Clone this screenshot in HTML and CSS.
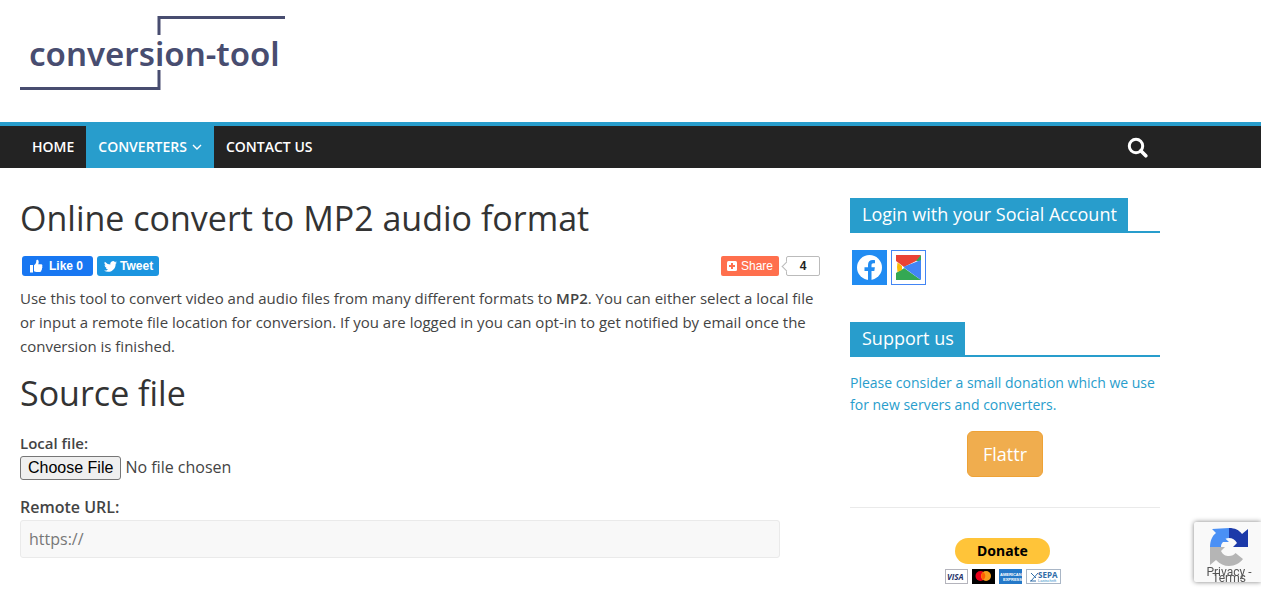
FILE: index.html
```
<!DOCTYPE html>
<html lang="en">
<head>
<meta charset="utf-8">
<meta name="viewport" content="width=device-width, initial-scale=1">
<title>Online convert to MP2 audio format</title>
<link rel="stylesheet" href="styles.css">
</head>
<body>
<header class="site-header">
  <a class="logo" href="#" aria-label="conversion-tool home">
    <svg width="265" height="76" viewBox="0 0 265 76">
      <g fill="none" stroke="#484d70" stroke-width="3">
        <path d="M265 2.500H139V20"/>
        <path d="M0 73.500H139V55"/>
      </g>
      <text class="logo-text" x="9" y="51">conversion-tool</text>
    </svg>
  </a>
</header>
<nav class="main-nav">
  <div class="container nav-inner">
    <a class="nav-link" href="#">HOME</a>
    <a class="nav-link active" href="#">CONVERTERS
      <svg class="caret" width="10" height="6" viewBox="0 0 10 6" fill="none" stroke="#fff" stroke-width="1.400"><path d="M1 1l4 4 4-4"/></svg>
    </a>
    <a class="nav-link" href="#">CONTACT US</a>
    <button class="search" type="button" aria-label="Search">
      <svg width="21" height="21" viewBox="0 0 21 21" fill="none" stroke="#fff"><circle cx="9" cy="9" r="6.700" stroke-width="3"/><path d="M13.800 13.800l5 5" stroke-width="3.600" stroke-linecap="round"/></svg>
    </button>
  </div>
</nav>
<div class="container layout">
  <main class="content">
    <h1 class="heading">Online convert to MP2 audio format</h1>
    <div class="social">
      <button class="pill like" type="button">
        <svg width="14" height="14" viewBox="0 0 14 14" fill="#fff"><path d="M1 6h3v7.500H1zM5 6.200C6.800 5.400 7.300 3.700 7.300 1.600 7.300.400 9.700.500 9.700 2.900c0 .9-.200 1.700-.500 2.400h3c1.200 0 1.600 1.200.9 1.900.600.700.400 1.500-.200 2 .300.700.100 1.400-.500 1.800.1 1.200-.500 1.900-1.600 1.900H7.500c-1 0-1.600-.200-2.500-.600z"/></svg>
        <span>Like 0</span>
      </button>
      <button class="pill tweet" type="button">
        <svg width="13" height="11" viewBox="0 0 24 20" fill="#fff"><path d="M24 2.400a9.800 9.800 0 0 1-2.800.8A5 5 0 0 0 23.300.500a9.900 9.900 0 0 1-3.100 1.200 4.900 4.900 0 0 0-8.400 4.500A14 14 0 0 1 1.700 1a4.900 4.900 0 0 0 1.500 6.600A4.900 4.900 0 0 1 1 7v.1a4.900 4.900 0 0 0 3.900 4.800 5 5 0 0 1-2.200.1 4.900 4.900 0 0 0 4.600 3.400A9.900 9.900 0 0 1 0 17.500a14 14 0 0 0 7.500 2.200c9.100 0 14-7.500 14-14V5A10 10 0 0 0 24 2.400z"/></svg>
        <span>Tweet</span>
      </button>
      <button class="pill share" type="button">
        <svg width="10" height="10" viewBox="0 0 10 10"><rect width="10" height="10" rx="1.500" fill="#fff"/><path d="M5 2v6M2 5h6" stroke="#ff6f4d" stroke-width="2"/></svg>
        <span>Share</span>
      </button>
      <span class="count">4</span>
    </div>
    <p class="intro">Use this tool to convert video and audio files from many different formats to <strong>MP2</strong>. You can either select a local file or input a remote file location for conversion. If you are logged in you can opt-in to get notified by email once the conversion is finished.</p>
    <h2 class="heading">Source file</h2>
    <form class="source">
      <label class="local-label" for="local">Local file:</label>
      <input class="file" id="local" type="file">
      <label class="remote-label" for="remote">Remote URL:</label>
      <input class="url" id="remote" type="text" placeholder="https://">
    </form>
  </main>
  <aside class="sidebar">
    <section class="widget">
      <h3 class="widget-title"><span>Login with your Social Account</span></h3>
      <div class="logins">
        <a class="login facebook" href="#" aria-label="Facebook">
          <svg width="25" height="25" viewBox="0 0 25 25"><circle cx="12.500" cy="12.500" r="12.500" fill="#fff"/><path d="M11 25v-9H7.500v-3.700H11V10c0-3.300 1.800-5 4.700-5 1.200 0 2.300.200 2.300.200v3h-1.500c-1.500 0-2 .9-2 1.900v2.200h3.400l-.600 3.700h-2.800v9z" fill="#218cf2"/></svg>
        </a>
        <a class="login google" href="#" aria-label="Google">
          <svg width="25" height="25" viewBox="0 0 25 25"><path d="M0 0h25l-3 5-14 7-8-6z" fill="#ea4335"/><path d="M25 0v7l-5-1zM0 25v-7l8-5 17 12z" fill="#34a853"/><path d="M25 5v20L7 12z" fill="#4285f4"/><path d="M1.500 7.500L6 11v4l-4.500 2q-1-5 0-9.500z" fill="#fbbc05"/><path d="M6 11.500l2.500 1L6 14.500z" fill="#fff"/></svg>
        </a>
      </div>
    </section>
    <section class="widget">
      <h3 class="widget-title"><span>Support us</span></h3>
      <a class="plea" href="#">Please consider a small donation which we use for new servers and converters.</a>
      <div class="support">
        <button class="flattr" type="button">Flattr</button>
        <hr class="rule">
        <div class="paypal">
          <button class="donate" type="button">Donate</button>
          <div class="cards">
            <svg width="23" height="15" viewBox="0 0 23 15"><rect x=".5" y=".5" width="22" height="14" fill="#fff" stroke="#b4b4bc"/><text class="visa" x="2" y="11">VISA</text></svg>
            <svg width="23" height="15" viewBox="0 0 23 15"><rect width="23" height="15"/><circle cx="8.500" cy="7" r="5" fill="#eb001b"/><circle cx="14" cy="7" r="5" fill="#f79e1b"/><path d="M11.300 3a5 5 0 0 1 0 8 5 5 0 0 1 0-8z" fill="#ff5f00"/></svg>
            <svg width="23" height="15" viewBox="0 0 23 15"><rect width="23" height="15" fill="#2478c8"/><text class="amex" x="1" y="7">AMERICAN</text><text class="amex" x="4" y="12">EXPRESS</text></svg>
            <svg width="35" height="15" viewBox="0 0 35 15"><rect x=".5" y=".5" width="34" height="14" fill="#fff" stroke="#a9b6c6"/><path d="M5 4l5 5M5 12L12 4M4 12h6" fill="none" stroke="#2f6ca8"/><text class="sepa" x="12" y="9">SEPA</text><text class="sepa-sub" x="12" y="13">Lastschrift</text></svg>
          </div>
        </div>
      </div>
    </section>
  </aside>
</div>
<aside class="recaptcha">
  <svg width="38" height="38" viewBox="0 0 38 38"><path d="M19 0v10c-1.500 0-2.600.200-3.500.700L19 14l-6 0c-1.500 1.500-2 3-2 5H0C0 13 2 8 6 5L2 1z" fill="#4a90f5"/><path d="M19 0c6 0 10 2 13 6l6-5v18H23l4-4c-2-3.500-4.500-5-8-5z" fill="#1c3aa9"/><path d="M0 19h15l-4 4c2 4 4.500 5 8 5 3 0 5-1 6.500-3l7.500 6c-3 4-8 7-14 7-5 0-9-2-13-6l-6 5z" fill="#b5b5b5"/></svg>
  <div class="terms"><a href="#">Privacy</a> - <a href="#">Terms</a></div>
</aside>
</body>
</html>
```
FILE: styles.css
```
* { box-sizing: border-box; }
body { margin: 0; background: #fff; color: #444; font-family: "Open Sans", sans-serif; font-size: 15px; overflow: hidden; }
a { text-decoration: none; color: inherit; }
button { border: 0; padding: 0; font-family: inherit; cursor: pointer; }
svg { display: block; flex: none; }
.container { max-width: 1180px; padding: 0 20px; }
.site-header { padding: 15px 20px 31px; }
.logo { display: block; }
.logo-text { font: 600 33px "Noto Sans", sans-serif; fill: #484d70; }

.main-nav { background: #232323; border-top: 4px solid #289dcc; }
.nav-inner { display: flex; }
.nav-link { display: flex; align-items: center; gap: 5px; padding: 0 12px; line-height: 42px; font-size: 14px; font-weight: 600; color: #fff; }
.nav-link.active { background: #289dcc; }
.search { margin-left: auto; margin-right: 12px; background: none; display: flex; align-items: center; }

.layout { display: flex; gap: 30px; padding-top: 30px; }
.content { flex: 1; min-width: 0; }
.heading { margin: 0; font-size: 34px; font-weight: 400; line-height: 40px; color: #333; }
.social { display: flex; gap: 4px; padding: 18px 0 10px 2px; }
.pill { display: flex; align-items: center; gap: 5px; height: 20px; padding: 0 6px; border-radius: 3px; color: #fff; font: bold 12px "Liberation Sans", Arial, sans-serif; }
.like { background: #1877f2; padding: 0 10px 0 7px; gap: 6px; }
.tweet { background: #1b95e0; gap: 3px; padding: 0 6px 0 7px; }
.share { background: #ff6f4d; margin-left: auto; padding: 0 6px; gap: 4px; border-radius: 2px; font-weight: 400; }
.count { position: relative; width: 34px; height: 20px; margin-left: 3px; border: 1px solid #bbb; border-radius: 2px; text-align: center; font: bold 12px/18px "Liberation Sans", Arial, sans-serif; color: #222; }
.count::before { content: ""; position: absolute; left: -4px; top: 6px; width: 6px; height: 6px; background: #fff; border: solid #bbb; border-width: 0 0 1px 1px; transform: rotate(45deg); }
.intro { margin: 0 0 15px; line-height: 24px; }
.intro strong { font-weight: 600; }
.source { display: flex; flex-direction: column; width: 95%; padding-top: 19px; }
.source label { font-weight: 600; line-height: 22px; }
.local-label { font-size: 15px; }
.remote-label { font-size: 16px; margin-top: 16px; }
.file { font: 16px "Open Sans", sans-serif; color: #444; height: 24px; margin-top: 2px; }
.file::file-selector-button { font: 16px "Liberation Sans", Arial, sans-serif; height: 24px; padding: 1px 7px; border: 1px solid #767676; border-radius: 3px; background: #efefef; color: #000; margin: 0 4px 0 0; }
.url { width: 100%; height: 38px; margin-top: 2px; padding: 0 8px; border: 1px solid #eaeaea; border-radius: 3px; background: #f8f8f8; font: 16px "Open Sans", sans-serif; color: #777; }
.url::placeholder { color: #777; }

.sidebar { width: 310px; flex: none; }
.widget-title { display: flex; margin: 0 0 15px; border-bottom: 2px solid #289dcc; font-size: 18px; font-weight: 400; line-height: 33px; color: #fff; }
.widget-title span { background: #289dcc; padding: 0 11px 0 12px; }
.logins { display: flex; gap: 4px; padding: 2px 2px 37px; }
.login { width: 35px; height: 35px; display: grid; place-items: center; }
.facebook { background: #218cf2; }
.google { border: 1px solid #4285f4; }
.plea { display: block; font-size: 14px; line-height: 22px; color: #289dcc; }
.support { display: flex; flex-direction: column; align-items: center; padding-top: 15px; }
.flattr { height: 46px; padding: 0 15px; border: 1px solid #eea236; border-radius: 6px; background: #f0ad4e; color: #fff; font-size: 18px; }
.rule { width: 100%; margin: 30px 0; border: 0; border-top: 1px solid #eaeaea; }
.paypal { display: flex; flex-direction: column; align-items: center; gap: 5px; padding-right: 5px; }
.donate { width: 95px; height: 26px; border-radius: 13px; padding-bottom: 2px; background: #ffc439; color: #000; font: 700 14px "Noto Sans", sans-serif; }
.cards { display: flex; gap: 4px; }
.visa { font: italic bold 8px "Open Sans", sans-serif; fill: #27346a; }
.amex { font: bold 4px "Liberation Sans", sans-serif; fill: #fff; }
.sepa { font: bold 8px "Open Sans", sans-serif; fill: #2f6ca8; }
.sepa-sub { font: 4px "Liberation Sans", sans-serif; fill: #2f8cc8; }

.recaptcha { position: fixed; right: 0; bottom: 9px; width: 67px; height: 60px; padding: 6px 0 0 16px; overflow: hidden; background: #f9f9f9; border-radius: 2px 0 0 2px; box-shadow: 0 0 5px #808080; }
.terms { width: 50px; margin: 3px 0 0 -6px; text-align: center; font: 12px/6px Roboto, sans-serif; color: #555; }
```
